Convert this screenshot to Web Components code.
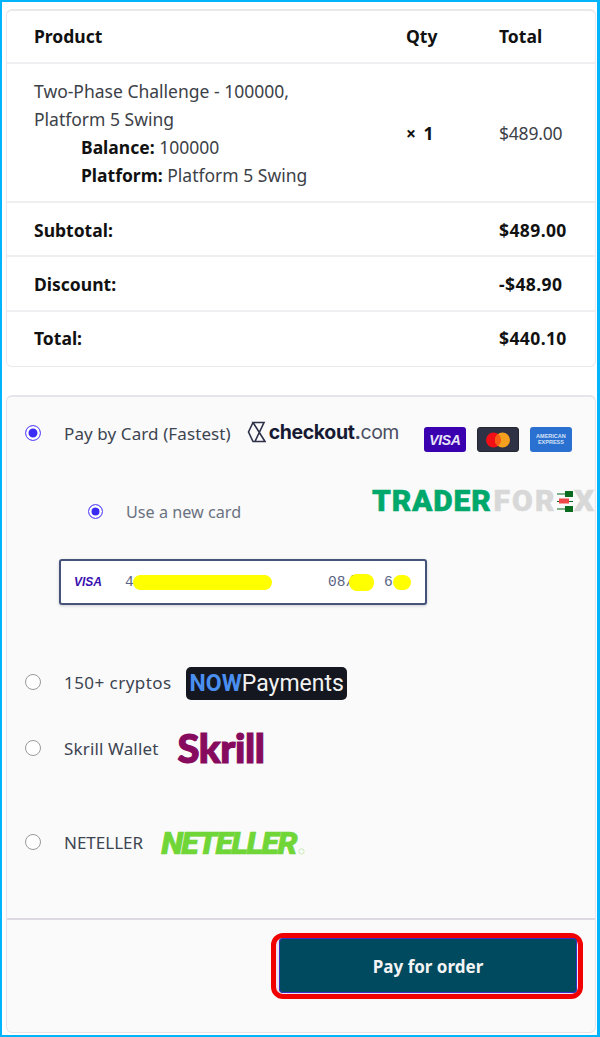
<!DOCTYPE html>
<html>
<head>
<meta charset="utf-8">
<style>
html, body { margin: 0; padding: 0; background: #fff; }
body { font-family: "Noto Sans", "Open Sans", sans-serif; color: #212529; }
</style>
</head>
<body>
<checkout-page>
  <order-card>
    <order-row head>
      <span>Product</span><span>Qty</span><span>Total</span>
    </order-row>
    <order-row>
      <div>Two-Phase Challenge - 100000,<br>Platform 5 Swing
        <div class="meta"><b>Balance:</b> 100000<br><b>Platform:</b> Platform 5 Swing</div>
      </div>
      <b style="word-spacing:3px">× 1</b>
      <span style="letter-spacing:-0.2px">$489.00</span>
    </order-row>
    <summary-row label="Subtotal:" value="$489.00" style="height:54px"></summary-row>
    <summary-row label="Discount:" value="-$48.90"></summary-row>
    <summary-row label="Total:" value="$440.10" last></summary-row>
  </order-card>
  <payment-card>
    <pay-method checked label="Pay by Card (Fastest)" style="height:76px;letter-spacing:.1px">
      <checkout-logo></checkout-logo>
      <card-brands></card-brands>
    </pay-method>
    <saved-card></saved-card>
    <pay-method label="150+ cryptos" style="height:66px;letter-spacing:.45px"><now-logo></now-logo></pay-method>
    <pay-method label="Skrill Wallet" style="height:94px;letter-spacing:.15px"><skrill-logo></skrill-logo></pay-method>
    <pay-method label="NETELLER" style="height:90px"><neteller-logo></neteller-logo></pay-method>
    <pay-footer></pay-footer>
  </payment-card>
  <trader-mark></trader-mark>
</checkout-page>

<script>
function define(name, html, setup) {
  customElements.define(name, class extends HTMLElement {
    constructor() {
      super();
      this.attachShadow({ mode: 'open' });
      this.shadowRoot.innerHTML = typeof html === 'function' ? html(this) : html;
    }
    connectedCallback() {
      if (setup) setup(this);
    }
  });
}

define('checkout-page', `
<style>
:host { display: block; position: relative; box-sizing: border-box; width: 600px; height: 1037px;
  border: solid #00b5fb; border-width: 2px 3px 2px 2px; padding: 7px 1px 0 4px; overflow: hidden; background: #fff; }
</style>
<slot></slot>`);

define('order-card', `
<style>
:host { display: block; height: 358px; box-sizing: border-box; border: 1px solid #e9e9ec; border-top-width: 2px;
  border-radius: 6px; font-size: 17.5px; line-height: 28px; }
</style>
<slot></slot>`);

define('order-row', `
<style>
:host { display: grid; grid-template-columns: 372px 93px 1fr; align-items: center; padding-left: 27px;
  border-bottom: 2px solid #efeff1; box-sizing: border-box; height: 139px; color: #3c4148; }
:host([head]) { height: 53px; font-weight: 700; color: #111; padding-bottom: 1px; }
::slotted(b) { color: #111; }
</style>
<slot></slot>`, el => {
  const meta = el.querySelector('.meta');
  if (meta) {
    meta.style.paddingLeft = '47px';
    meta.querySelectorAll('b').forEach(b => { b.style.color = '#111'; });
  }
});

define('summary-row', el => `
<style>
:host { display: flex; justify-content: space-between; align-items: center; box-sizing: border-box;
  height: 55px; padding: 1px 28px 0 27px; font-weight: 700; color: #111; border-bottom: 2px solid #efeff1; }
:host([last]) { border-bottom: 0; padding: 0 28px 3px 27px; }
.value { width: 68px; letter-spacing: .4px; white-space: nowrap; }
</style>
<span>${el.getAttribute('label')}</span><span class="value">${el.getAttribute('value')}</span>`);

define('payment-card', `
<style>
:host { display: block; box-sizing: border-box; height: 638px; margin-top: 28px; background: #fafafa;
  border: 1px solid #e6e6ea; border-top-width: 2px; border-radius: 6px; padding-top: 22px; position: relative; }
</style>
<slot></slot>`);

define('radio-dot', `
<style>
:host { display: block; box-sizing: border-box; width: 16px; height: 16px; border-radius: 50%;
  border: 1.5px solid #9a9a9a; background: #fff; flex: none; }
:host([checked]) { border-color: #6c5cff; background: #3a2bf5; box-shadow: inset 0 0 0 2.5px #fff; }
</style>`);

define('pay-method', el => `
<style>
:host { display: flex; align-items: flex-start; box-sizing: border-box; padding-left: 18px;
  font-size: 17px; line-height: 22px; color: #3d4451; }
radio-dot { margin: 6px 15px 0 0; }
.label { padding-top: 4px; padding-left: 8px; white-space: nowrap; }
</style>
<radio-dot ${el.hasAttribute('checked') ? 'checked' : ''}></radio-dot>
<span class="label">${el.getAttribute('label')}</span>
<slot></slot>`);

define('checkout-logo', `
<style>
:host { display: flex; align-items: center; margin-left: 16px; font-family: Inter, sans-serif; font-size: 19.5px; line-height: 26px; color: #171a33; letter-spacing: 0; }
svg { width: 19px; height: 22px; margin-right: 3px; }
b { font-weight: 700; letter-spacing: -0.4px; }
span { color: #4b4f63; letter-spacing: -0.5px; }
</style>
<svg viewBox="0 0 19 22" fill="none" stroke="#2c3048" stroke-width="1.6"><path d="M6 1.500h11L8 20.500h10L6 1.500zM6 1.500L1.500 11 6 20.500h3"/></svg>
<b>checkout</b><span><b>.</b>com</span>`);

define('card-brands', `
<style>
:host { display: flex; gap: 11px; margin-left: 25px; margin-top: 8px; letter-spacing: 0; }
div { width: 42px; height: 25px; border-radius: 3px; box-sizing: border-box; display: flex; align-items: center; justify-content: center;
  font-family: "Liberation Sans", sans-serif; color: #fff; }
.visa { background: #3a00b0; font-weight: 700; font-style: italic; font-size: 14px; letter-spacing: -0.3px; color: #e8e4f8; }
.mc { background: #2f3244; border: 1px solid #23252f; }
.amex { background: #2a70d0; font-size: 5.5px; line-height: 5.5px; font-weight: 700; text-align: center; color: #d5e3f7; }
.mc svg { width: 26px; height: 16px; }
</style>
<div class="visa">VISA</div>
<div class="mc"><svg viewBox="0 0 26 16"><circle cx="8.500" cy="8" r="7.500" fill="#f40f16"/><circle cx="17.500" cy="8" r="7.500" fill="#f5a01e"/><path d="M13 2a7.500 7.500 0 0 1 0 12 7.500 7.500 0 0 1 0-12z" fill="#fb5b14"/></svg></div>
<div class="amex">AMERICAN<br>EXPRESS</div>`);

define('saved-card', `
<style>
:host { display: block; padding-left: 81px; color: #6b7280; font-size: 16.2px; line-height: 22px; }
.use { display: flex; align-items: center; gap: 23px; height: 47px; margin-top: -7px; margin-bottom: 24px; }
.use radio-dot { width: 15px; height: 15px; }
.field { display: flex; align-items: center; box-sizing: border-box; width: 368px; height: 46px; margin-left: -29px;
  background: #fff; border: 2px solid #46527a; border-radius: 3px; box-shadow: 0 1px 3px rgba(60,66,87,.25);
  font-family: "Liberation Mono", monospace; font-size: 14.5px; color: #5a6484; }
.visa { font-family: "Liberation Sans", sans-serif; font-weight: 700; font-style: italic; font-size: 12px; color: #3a10b0; width: 51px; padding-left: 13px; box-sizing: content-box; }
.mask { display: block; background: #ffff00; height: 15px; border-radius: 8px; }
.num { display: flex; align-items: center; }
</style>
<div class="use"><radio-dot checked></radio-dot><span>Use a new card</span></div>
<div class="field">
  <span class="visa">VISA</span>
  <span class="num" style="width:203px">4<span class="mask" style="width:139px;margin-left:-1px"></span></span>
  <span class="num" style="width:56px">08/<span class="mask" style="width:25px;height:17px;margin-left:-5px"></span></span>
  <span class="num">6<span class="mask" style="width:18px;margin-left:0"></span></span>
</div>
<div style="height:63px"></div>`);

define('now-logo', `
<style>
:host { display: block; margin-left: 14px; margin-top: -1px; height: 33px; width: 161px; box-sizing: border-box; background: #14171f; border-radius: 5px;
  font-family: Roboto, sans-serif; font-size: 23px; line-height: 33px; color: #f2f2f2; padding-left: 4px; white-space: nowrap; letter-spacing: 0; }
b { color: #4a8ff0; font-weight: 700; }
</style>
<b>NOW</b>Payments`);

define('skrill-logo', `
<style>
:host { display: block; margin-left: 19px; margin-top: -8px; font-family: Lato, sans-serif; font-weight: 900; font-size: 40px; line-height: 44px;
  color: #860a5e; letter-spacing: -.4px; -webkit-text-stroke: 1.2px #860a5e; }
</style>
Skrill`);

define('neteller-logo', `
<style>
:host { display: flex; align-items: flex-end; margin-left: 18px; margin-top: -3px; height: 36px; font-family: Roboto, sans-serif; font-weight: 900; font-style: italic; font-size: 32px; line-height: 36px;
  color: #70d637; letter-spacing: -1.6px; -webkit-text-stroke: .6px #70d637; }
svg { width: 7px; height: 7px; margin: 0 0 6px 2px; }
</style>
NETELLER<svg viewBox="0 0 8 8"><circle cx="4" cy="4" r="3" fill="none" stroke="#bfe8ad" stroke-width="1"/></svg>`);

define('pay-footer', `
<style>
:host { display: flex; justify-content: flex-end; box-sizing: border-box; border-top: 2px solid #ddd9e3; padding: 13px 12px 0 0; }
.ring { box-sizing: border-box; width: 312px; height: 66px; border: 5px solid #f00000; border-radius: 12px; padding: 0 1px 1px 3px; background: #e9e4f4; }
button { display: block; width: 100%; height: 100%; border: 0; border-radius: 4px; background: #004a60; color: #f4f4f4; outline: 1px solid #3a30c8; outline-offset: -1px;
  font: 700 17px "Noto Sans", sans-serif; padding: 2px 0 0; }
</style>
<div class="ring"><button>Pay for order</button></div>`);

define('trader-mark', `
<style>
:host { position: absolute; left: 370px; top: 482px; display: flex; align-items: center; font-family: Roboto, sans-serif; font-weight: 900; font-size: 30px; line-height: 34px; letter-spacing: .8px; white-space: nowrap; -webkit-text-stroke: .5px; }
.g { color: #00a96b; }
.l { color: #d8d8d8; letter-spacing: 2.2px; margin-left: 2px; }
svg { width: 16px; height: 23px; margin: 0 1px 0 0; flex: none; }
.x { display: inline-block; margin-left: 0; letter-spacing: 0; transform: scaleX(1.05); transform-origin: left center; }
</style>
<span class="g">TRADER</span><span class="l">FOR</span>
<svg viewBox="0 0 16 23"><path d="M0 4h16M0 11.500h16M0 19h16" stroke="#0a6b1f" stroke-width="1"/><rect x="8" y="1" width="8" height="6" fill="#0a6b1f"/><rect x="2" y="8.500" width="10" height="5" fill="#f04848"/><rect x="8" y="16" width="8" height="6" fill="#0a6b1f"/></svg>
<span class="l x">X</span>`);
</script>
</body>
</html>
